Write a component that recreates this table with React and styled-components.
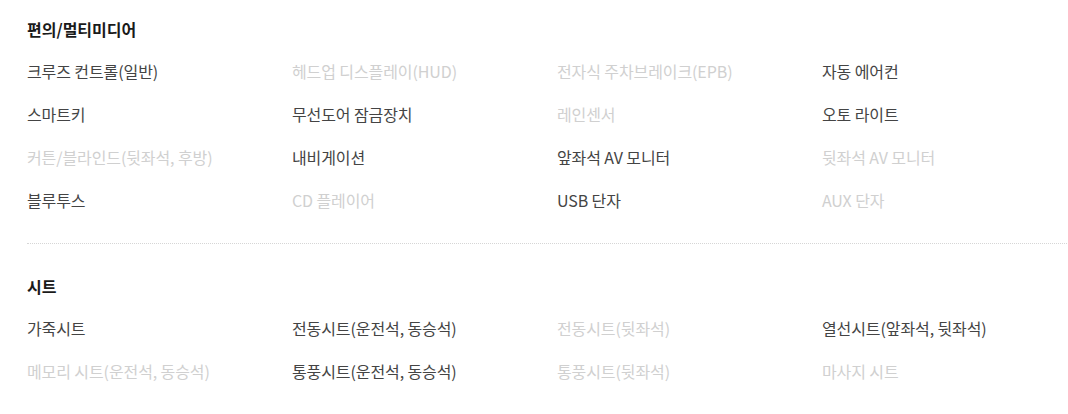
import React from 'react';
import styled, { createGlobalStyle } from 'styled-components';

const GlobalStyle = createGlobalStyle`
  html, body {
    margin: 0;
    padding: 0;
    background: #fff;
    overflow: hidden;
  }
  body {
    font-family: "Noto Sans CJK KR", "Noto Sans", "Liberation Sans", sans-serif;
    -webkit-font-smoothing: antialiased;
  }
`;

const Page = styled.div`
  width: 1068px;
  padding: 0 1px 0 27px;
  box-sizing: border-box;
`;

const Section = styled.section`
  padding: ${props => (props.first ? '18px 0 22px' : '31px 0 0')};
  border-bottom: ${props => (props.divider ? '1px dotted #d6d6d6' : 'none')};
`;

const Heading = styled.h3`
  margin: 0 0 9px;
  font-size: 16px;
  line-height: 22px;
  font-weight: 700;
  color: #1a1a1a;
`;

const OptionGrid = styled.ul`
  list-style: none;
  margin: 0;
  padding: 0;
  display: grid;
  grid-template-columns: repeat(3, 265px) 1fr;
  grid-auto-rows: 43px;
`;

const Option = styled.li`
  display: flex;
  align-items: center;
  font-size: 16px;
  letter-spacing: -0.1px;
  color: ${props => (props.off ? '#d0d0d0' : '#444')};
  white-space: nowrap;
`;

const sections = [
  {
    title: '편의/멀티미디어',
    items: [
      ['크루즈 컨트롤(일반)', true],
      ['헤드업 디스플레이(HUD)', false],
      ['전자식 주차브레이크(EPB)', false],
      ['자동 에어컨', true],
      ['스마트키', true],
      ['무선도어 잠금장치', true],
      ['레인센서', false],
      ['오토 라이트', true],
      ['커튼/블라인드(뒷좌석, 후방)', false],
      ['내비게이션', true],
      ['앞좌석 AV 모니터', true],
      ['뒷좌석 AV 모니터', false],
      ['블루투스', true],
      ['CD 플레이어', false],
      ['USB 단자', true],
      ['AUX 단자', false],
    ],
  },
  {
    title: '시트',
    items: [
      ['가죽시트', true],
      ['전동시트(운전석, 동승석)', true],
      ['전동시트(뒷좌석)', false],
      ['열선시트(앞좌석, 뒷좌석)', true],
      ['메모리 시트(운전석, 동승석)', false],
      ['통풍시트(운전석, 동승석)', true],
      ['통풍시트(뒷좌석)', false],
      ['마사지 시트', false],
    ],
  },
];

const App = () => {
  return (
    <Page>
      <GlobalStyle />
      {sections.map((section, i) => (
        <Section key={section.title} first={i === 0} divider={i < sections.length - 1}>
          <Heading>{section.title}</Heading>
          <OptionGrid>
            {section.items.map(([label, has]) => (
              <Option key={label} off={!has}>{label}</Option>
            ))}
          </OptionGrid>
        </Section>
      ))}
    </Page>
  );
};

export default App;
